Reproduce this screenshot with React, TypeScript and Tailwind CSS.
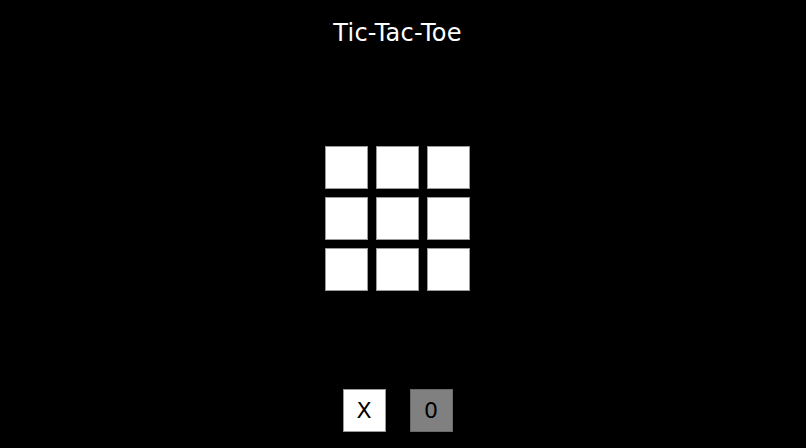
import { useState } from "react";

type Mark = "X" | "O" | null;

export default function App() {
  const [cells, setCells] = useState<Mark[]>(Array(9).fill(null));
  const [player, setPlayer] = useState<"X" | "O">("X");

  const play = (i: number) => {
    if (cells[i]) return;
    const next = [...cells];
    next[i] = player;
    setCells(next);
    setPlayer(player === "X" ? "O" : "X");
  };

  return (
    <div className="w-full h-[448px] bg-black text-white flex flex-col items-center pr-[11px]" style={{ fontFamily: '"DejaVu Sans", sans-serif' }}>
      {/* Title */}
      <h1 className="mt-[18px] h-[30px] text-[24px] leading-[30px] tracking-[0.3px]">Tic-Tac-Toe</h1>

      {/* Board */}
      <div className="mt-[98px] grid grid-cols-3 gap-[8px]">
        {cells.map((c, i) => (
          <button
            key={i}
            onClick={() => play(i)}
            className="w-[43px] h-[43px] bg-white border border-[#9a9a9a] text-black text-2xl flex items-center justify-center"
          >
            {c}
          </button>
        ))}
      </div>

      {/* Player picker */}
      <div className="mt-[98px] flex gap-[24px]">
        <button
          onClick={() => setPlayer("X")}
          className="w-[43px] h-[43px] bg-white border border-[#9a9a9a] text-black text-[22px] flex items-center justify-center"
        >
          X
        </button>
        <button
          onClick={() => setPlayer("O")}
          className="w-[43px] h-[43px] bg-[#808080] border border-[#6a6a6a] text-black text-[22px] flex items-center justify-center"
        >
          0
        </button>
      </div>
    </div>
  );
}
